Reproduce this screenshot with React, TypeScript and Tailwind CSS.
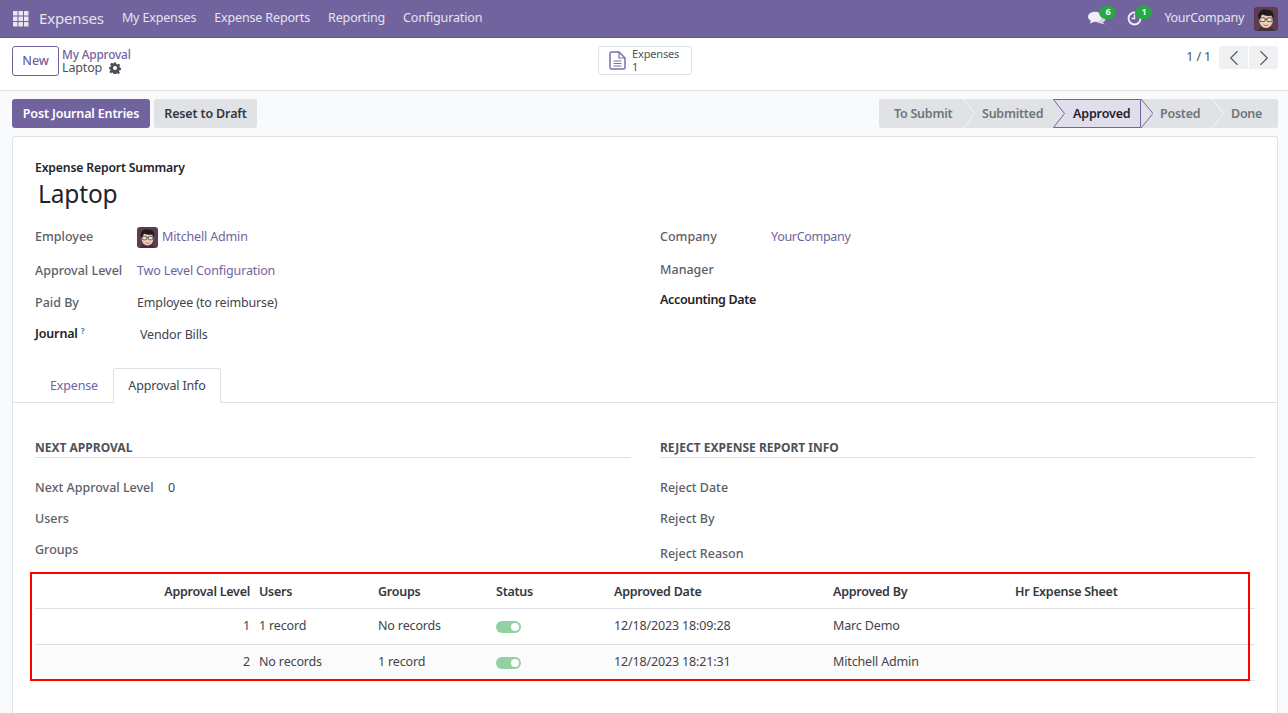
import { ChevronLeft, ChevronRight } from "lucide-react";

const font = { fontFamily: '"Noto Sans", sans-serif' };

const Avatar = ({ size }: { size: number }) => (
  <svg width={size} height={size} viewBox="0 0 24 24" className="shrink-0 rounded-[3px]">
    <rect width="24" height="24" fill="#5f3b50" />
    <path d="M4 24c0-3.500 3.500-5 8-5s8 1.500 8 5z" fill="#43303f" />
    <ellipse cx="12" cy="13.500" rx="6.800" ry="7.500" fill="#f3cdb6" />
    <path d="M4.800 12C3 6.500 6 2.500 11 2.500c2 0 3 .7 4 .7 3 0 5.500 3 4.200 8.800l-1.400-3.500c-3 .8-6.800.6-9.800-1.200L6.200 12z" fill="#1e1a1d" />
    <rect x="6" y="10.800" width="5" height="3.800" rx=".8" fill="#dfe2e0" stroke="#3a3a3a" strokeWidth=".8" />
    <rect x="13" y="10.800" width="5" height="3.800" rx=".8" fill="#dfe2e0" stroke="#3a3a3a" strokeWidth=".8" />
    <path d="M11 12.300h2" stroke="#3a3a3a" strokeWidth=".8" />
    <path d="M9.500 17.800c1.500 1 3.500 1 5 0" stroke="#a5584c" strokeWidth=".9" fill="none" />
  </svg>
);

const Field = ({ label, bold, children, className }: { label: React.ReactNode; bold?: boolean; children?: React.ReactNode; className?: string }) => (
  <div className={`flex items-center ${className ?? ""}`}>
    <div className={`w-[102px] shrink-0 ${bold ? "font-semibold text-[#1f2329]" : "font-medium tracking-normal text-[#5c6068]"}`}>{label}</div>
    {children}
  </div>
);

const Toggle = () => (
  <div className="flex h-[12px] w-[25px] items-center justify-end rounded-full bg-[#93d1a3] pr-[2px]">
    <div className="h-[8px] w-[8px] rounded-full bg-white" />
  </div>
);

const Step = ({ label, w, first }: { label: string; w: string; first?: boolean }) => (
  <div className={`relative flex h-full items-center pt-px font-semibold tracking-[-0.25px] text-[#6f757c] ${first ? "pl-[15px]" : "pl-[19px]"} ${w}`}>
    {!first && (
      <svg width="12" height="29" viewBox="0 0 12 29" className="absolute left-0 top-0">
        <path d="M0 0l12 14.500L0 29" fill="none" stroke="#f5f6f7" strokeWidth="1" />
      </svg>
    )}
    {label}
  </div>
);

const rows = [
  ["1", "1 record", "No records", "12/18/2023 18:09:28", "Marc Demo"],
  ["2", "No records", "1 record", "12/18/2023 18:21:31", "Mitchell Admin"],
];

export default function App() {
  return (
    <div style={font} className="flex h-[713px] w-[1288px] flex-col overflow-hidden bg-[#f9fafb] text-[12.500px] tracking-[-0.15px] text-[#3f444b]">
      <nav className="flex h-[38px] shrink-0 items-center border-b border-[#62558c] bg-[#71639e] pl-[13px] pr-[10px] text-[#e6e3ef]">
        <svg width="16" height="16" viewBox="0 0 16 16" fill="#e9e6f1">
          {[0, 5.500, 11].flatMap((x) =>
            [0, 5.500, 11].map((y) => <rect key={`${x}-${y}`} x={x} y={y} width="4.500" height="4.500" rx=".5" />)
          )}
        </svg>
        <span className="ml-[10px] text-[15px]">Expenses</span>
        <div className="ml-[18px] flex gap-[18px]">
          <span>My Expenses</span>
          <span>Expense Reports</span>
          <span>Reporting</span>
          <span>Configuration</span>
        </div>
        <div className="ml-auto flex items-center">
          <div className="relative mr-[21px] h-[16px] w-[18px]">
            <svg width="18" height="14" viewBox="0 0 18 14" fill="#f0eef6">
              <ellipse cx="12" cy="8" rx="5.500" ry="4" fill="#d9d5e6" />
              <path d="M13 10l4 3.500-6-1.500z" fill="#d9d5e6" />
              <ellipse cx="6.800" cy="5.800" rx="6.800" ry="5" />
              <path d="M3 9l-1 3.500 5-2z" />
            </svg>
            <span className="absolute left-[11px] top-[-5px] flex h-[13px] w-[17px] items-center justify-center rounded-full bg-[#28a745] text-[9px] font-bold text-white">6</span>
          </div>
          <div className="relative mr-[22px] h-[16px] w-[15px]">
            <svg width="15" height="15" viewBox="0 0 15 15" fill="none" stroke="#f0eef6" strokeWidth="1.800">
              <circle cx="7.500" cy="7.500" r="6" />
              <path d="M7.500 3.500v4H4.500" strokeWidth="1.400" />
            </svg>
            <span className="absolute left-[8px] top-[-5px] flex h-[13px] w-[17px] items-center justify-center rounded-full bg-[#28a745] text-[9px] font-bold text-white">1</span>
          </div>
          <span className="tracking-[-0.3px]">YourCompany</span>
          <div className="ml-[10px]">
            <Avatar size={24} />
          </div>
        </div>
      </nav>

      <div className="flex h-[53px] shrink-0 items-start border-b border-[#dee2e6] bg-white pl-[12px] pr-[10px] pt-[8px]">
        <div className="flex w-[586px] shrink-0 items-center">
          <button className="h-[30px] w-[47px] rounded-[3px] border border-[#71639e] font-medium text-[#71639e]">New</button>
          <div className="ml-[3px] flex flex-col leading-[14px]">
            <span className="text-[11.800px] font-medium text-[#71639e]">My Approval</span>
            <span className="flex items-center gap-[7px] text-[#4d5259]">
              Laptop
              <svg width="12" height="12" viewBox="0 0 24 24" fill="#4a4f56">
                <path d="M10 1h4l.6 3 2.400 1 2.600-1.700 2.800 2.800L20.700 8.700l1 2.400 2.300.9v4l-3 .6-1 2.400 1.700 2.600-2.800 2.800-2.600-1.700-2.400 1-.9 1.300h-4l-.6-3-2.400-1-2.600 1.700-2.800-2.800L3 16.400 2 14l-2-.5v-3l3-.6 1-2.400-1.700-2.600L5.100 1.500l2.600 1.700 2-.9zM12 8a4 4 0 100 8 4 4 0 000-8z" />
              </svg>
            </span>
          </div>
        </div>
        <div className="flex h-[29px] w-[94px] items-center rounded-[3px] border border-[#dee2e6] pl-[10px]">
          <svg width="17" height="19" viewBox="0 0 17 19" fill="none" stroke="#7c6fa8" strokeWidth="1.500">
            <path d="M1 2.500A1.500 1.500 0 012.500 1H10l6 6v9.500a1.500 1.500 0 01-1.500 1.500h-12A1.500 1.500 0 011 16.500z" />
            <path d="M10 1v6h6M4.500 10h8M4.500 12.500h8M4.500 15h8" strokeWidth="1.200" />
          </svg>
          <div className="ml-[6px] flex flex-col pb-[2px] text-[11px] leading-[13px] text-[#4d5259]">
            <span>Expenses</span>
            <span>1</span>
          </div>
        </div>
        <div className="ml-auto flex items-center">
          <span className="text-[#4d5259]">1 / 1</span>
          <div className="ml-[8px] flex h-[23px] gap-px overflow-hidden rounded-[3px]">
            <div className="flex w-[29px] items-center justify-center bg-[#eff0f2]">
              <ChevronLeft size={26} strokeWidth={1} color="#555a61" />
            </div>
            <div className="flex w-[29px] items-center justify-center bg-[#eff0f2]">
              <ChevronRight size={26} strokeWidth={1} color="#555a61" />
            </div>
          </div>
        </div>
      </div>

      <div className="flex shrink-0 items-center justify-between pl-[12px] pr-[10px] pt-[8px]">
        <div className="flex gap-[4px] font-semibold">
          <button className="h-[29px] w-[138px] rounded-[3px] bg-[#71639e] pt-px text-white">Post Journal Entries</button>
          <button className="h-[29px] w-[103px] rounded-[3px] bg-[#e0e2e6] pt-px text-[#33383f]">Reset to Draft</button>
        </div>
        <div className="flex h-[29px] overflow-hidden rounded-[3px] bg-[#e0e2e6]">
          <Step label="To Submit" w="w-[84px]" first />
          <Step label="Submitted" w="w-[90px]" />
          <div className="relative flex h-full w-[88px] items-center pl-[20px] pt-px font-semibold text-[#1f2329]">
            <svg width="88" height="29" viewBox="0 0 88 29" className="absolute left-0 top-0">
              <path d="M.5.500H87.500V28.500H.5l11-14z" fill="#e1deeb" stroke="#71639e" />
            </svg>
            <span className="relative">Approved</span>
            <svg width="12" height="29" viewBox="0 0 12 29" className="absolute left-[88px] top-0 z-10">
              <path d="M0 0l12 14.500L0 29" fill="none" stroke="#71639e" />
            </svg>
          </div>
          <Step label="Posted" w="w-[71px]" />
          <Step label="Done" w="w-[66px]" />
        </div>
      </div>

      <div className="ml-[12px] mr-[10px] mt-[8px] flex-1 rounded-t-[3px] border border-b-0 border-[#dee2e6] bg-white">
        <div className="px-[22px] pt-[23px]">
          <div className="text-[12.200px] font-semibold leading-[16px] text-[#1f2329]">Expense Report Summary</div>
          <div className="ml-[3px] mt-px text-[24.500px] leading-[34px] text-[#1f2329]">Laptop</div>
          <div className="mt-[14px] flex">
            <div className="w-[625px] shrink-0">
              <Field label="Employee" className="h-[24px]">
                <div className="flex items-center gap-[4px] text-[#71639e]">
                  <Avatar size={21} />
                  Mitchell Admin
                </div>
              </Field>
              <Field label="Approval Level" className="mt-[10px] h-[24px]">
                <span className="text-[#71639e]">Two Level Configuration</span>
              </Field>
              <Field label="Paid By" className="mt-[8px] h-[24px]">
                <span>Employee (to reimburse)</span>
              </Field>
              <Field
                bold
                className="mt-[8px] h-[24px]"
                label={
                  <span className="relative top-[-1px]">
                    Journal <sup className="text-[8px] font-bold text-[#3a7fc1]">?</sup>
                  </span>
                }
              >
                <span className="ml-[3px]">Vendor Bills</span>
              </Field>
            </div>
            <div className="flex-1">
              <div className="flex h-[24px] items-center">
                <div className="w-[111px] font-medium tracking-normal text-[#5c6068]">Company</div>
                <span className="tracking-[-0.3px] text-[#71639e]">YourCompany</span>
              </div>
              <div className="mt-[9px] flex h-[24px] items-center font-medium tracking-normal text-[#5c6068]">Manager</div>
              <div className="mt-[6px] flex h-[24px] items-center font-semibold tracking-[-0.35px] text-[#1f2329]">Accounting Date</div>
            </div>
          </div>
        </div>

        <div className="mt-[21px] flex h-[35px] border-b border-[#dee2e6] pl-[22px]">
          <div className="flex h-[35px] w-[78px] items-center justify-center pt-px text-[#71639e]">Expense</div>
          <div className="flex h-[35px] w-[108px] items-center justify-center rounded-t-[3px] border border-b-0 border-[#dee2e6] bg-white">Approval Info</div>
        </div>

        <div className="flex px-[22px] pt-[37px]">
          <div className="mr-[29px] w-[596px] shrink-0">
            <div className="border-b border-[#dee2e6] pb-[1px] text-[12px] font-bold leading-[16px] tracking-normal text-[#4d5259]">NEXT APPROVAL</div>
            <div className="mt-[18px] flex h-[24px] items-center">
              <div className="w-[133px] font-medium tracking-normal text-[#5c6068]">Next Approval Level</div>
              <span>0</span>
            </div>
            <div className="mt-[7px] flex h-[24px] items-center font-medium tracking-normal text-[#5c6068]">Users</div>
            <div className="mt-[7px] flex h-[24px] items-center font-medium tracking-normal text-[#5c6068]">Groups</div>
          </div>
          <div className="flex-1 font-medium tracking-normal text-[#5c6068]">
            <div className="border-b border-[#dee2e6] pb-[1px] text-[12px] font-bold leading-[16px] text-[#4d5259]">REJECT EXPENSE REPORT INFO</div>
            <div className="mt-[18px] flex h-[24px] items-center">Reject Date</div>
            <div className="mt-[7px] flex h-[24px] items-center">Reject By</div>
            <div className="mt-[11px] flex h-[24px] items-center">Reject Reason</div>
          </div>
        </div>

        <div className="relative ml-[22px] mr-[22px] mt-[9px]">
          <div className="flex h-[34px] items-center border-b border-[#dee2e6] pt-px font-semibold tracking-[-0.25px] text-[#33383f]">
            <div className="w-[215px] text-right">Approval Level</div>
            <div className="ml-[9px] w-[119px]">Users</div>
            <div className="w-[118px]">Groups</div>
            <div className="w-[118px]">Status</div>
            <div className="w-[219px]">Approved Date</div>
            <div className="w-[182px]">Approved By</div>
            <div>Hr Expense Sheet</div>
          </div>
          {rows.map((r, i) => (
            <div key={r[0]} className={`flex h-[36px] items-center border-b border-[#dee2e6] ${i === 1 ? "bg-[#fbfbfb]" : ""}`}>
              <div className="w-[215px] text-right">{r[0]}</div>
              <div className="ml-[9px] w-[119px]">{r[1]}</div>
              <div className="w-[118px]">{r[2]}</div>
              <div className="w-[118px]">
                <Toggle />
              </div>
              <div className="w-[219px]">{r[3]}</div>
              <div className="w-[182px]">{r[4]}</div>
            </div>
          ))}
          <div className="pointer-events-none absolute left-[-5px] top-[-3px] h-[109px] w-[1220px] border-2 border-[#f00]" />
        </div>
      </div>
    </div>
  );
}
